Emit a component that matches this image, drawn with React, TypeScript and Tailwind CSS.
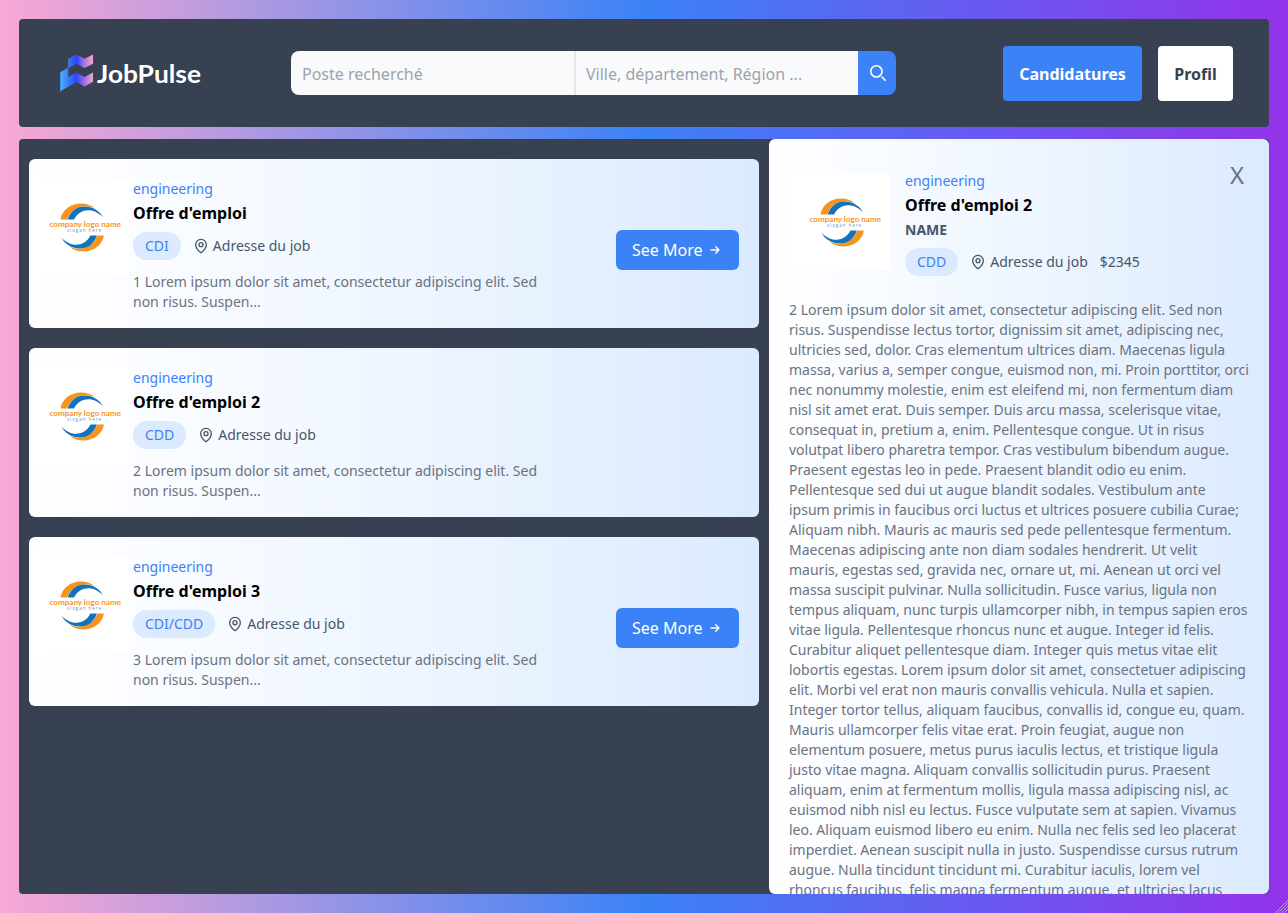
import React from "react";
import { HiOutlineArrowSmRight } from "react-icons/hi";
import { MapPin } from "lucide-react";

type Job = { id: number; title: string; contract: string; open?: boolean };

const jobs: Job[] = [
  { id: 1, title: "Offre d'emploi", contract: "CDI" },
  { id: 2, title: "Offre d'emploi 2", contract: "CDD", open: true },
  { id: 3, title: "Offre d'emploi 3", contract: "CDI/CDD" },
];

const description =
  "2 Lorem ipsum dolor sit amet, consectetur adipiscing elit. Sed non risus. Suspendisse lectus tortor, dignissim sit amet, adipiscing nec, ultricies sed, dolor. Cras elementum ultrices diam. Maecenas ligula massa, varius a, semper congue, euismod non, mi. Proin porttitor, orci nec nonummy molestie, enim est eleifend mi, non fermentum diam nisl sit amet erat. Duis semper. Duis arcu massa, scelerisque vitae, consequat in, pretium a, enim. Pellentesque congue. Ut in risus volutpat libero pharetra tempor. Cras vestibulum bibendum augue. Praesent egestas leo in pede. Praesent blandit odio eu enim. Pellentesque sed dui ut augue blandit sodales. Vestibulum ante ipsum primis in faucibus orci luctus et ultrices posuere cubilia Curae; Aliquam nibh. Mauris ac mauris sed pede pellentesque fermentum. Maecenas adipiscing ante non diam sodales hendrerit. Ut velit mauris, egestas sed, gravida nec, ornare ut, mi. Aenean ut orci vel massa suscipit pulvinar. Nulla sollicitudin. Fusce varius, ligula non tempus aliquam, nunc turpis ullamcorper nibh, in tempus sapien eros vitae ligula. Pellentesque rhoncus nunc et augue. Integer id felis. Curabitur aliquet pellentesque diam. Integer quis metus vitae elit lobortis egestas. Lorem ipsum dolor sit amet, consectetuer adipiscing elit. Morbi vel erat non mauris convallis vehicula. Nulla et sapien. Integer tortor tellus, aliquam faucibus, convallis id, congue eu, quam. Mauris ullamcorper felis vitae erat. Proin feugiat, augue non elementum posuere, metus purus iaculis lectus, et tristique ligula justo vitae magna. Aliquam convallis sollicitudin purus. Praesent aliquam, enim at fermentum mollis, ligula massa adipiscing nisl, ac euismod nibh nisl eu lectus. Fusce vulputate sem at sapien. Vivamus leo. Aliquam euismod libero eu enim. Nulla nec felis sed leo placerat imperdiet. Aenean suscipit nulla in justo. Suspendisse cursus rutrum augue. Nulla tincidunt tincidunt mi. Curabitur iaculis, lorem vel rhoncus faucibus, felis magna fermentum augue, et ultricies lacus";

function BrandLogo() {
  return (
    <div className="w-[232px] shrink-0 pl-[1px]">
      <svg width="150" height="40" viewBox="0 0 150 40">
        <defs>
          <linearGradient id="brandTop" x1="8" x2="33" y1="0" y2="0" gradientUnits="userSpaceOnUse">
            <stop offset="0" stopColor="#3c78f0" />
            <stop offset="0.36" stopColor="#2b46ff" />
            <stop offset="0.64" stopColor="#a577df" />
            <stop offset="1" stopColor="#f9a5cc" />
          </linearGradient>
          <linearGradient id="brandBottom" x1="0" x2="33" y1="0" y2="0" gradientUnits="userSpaceOnUse">
            <stop offset="0" stopColor="#4ab3f8" />
            <stop offset="0.5" stopColor="#2b46ff" />
            <stop offset="0.74" stopColor="#9b6fe0" />
            <stop offset="1" stopColor="#f9a5cc" />
          </linearGradient>
        </defs>
        <path d="M8.3 5.7 16.500 1.500l8 4.200L33 1.500v9.200L24.500 15 16.500 10.700 8.300 15.300Z" fill="url(#brandTop)" />
        <path d="M0 19.300 8.300 14.800v9.200l8.200-4.500 8 4.500L33 19.500v9.200l-8.500 4.900-8-4.600L0 38.500Z" fill="url(#brandBottom)" />
        <path d="M.5 19.500v18M8.500 6v9" stroke="#3a86d8" strokeWidth=".8" />
        <text x="37" y="29.500" textLength="104" lengthAdjust="spacingAndGlyphs" className="fill-white font-['Lato'] text-[24.500px] font-bold">JobPulse</text>
      </svg>
    </div>
  );
}

function CompanyLogo() {
  return (
    <svg width="96" height="96" viewBox="0 0 96 96" className="shrink-0">
      <rect width="96" height="96" fill="white" />
      <g>
        <path d="M27.500 40.500C29 31 37.500 24.500 48 24.500c6 0 10 1.700 13.500 4.500C48 24 38.500 30 34 40.500Z" fill="#f7941d" />
        <path d="M34.500 40.500C38 31 45 27 52 27.500c9 .5 15 5 18 11C62 29 47.500 28 41 40.500Z" fill="#1173bc" />
      </g>
      <g transform="rotate(180 49.200 48.500)">
        <path d="M27.500 40.500C29 31 37.500 24.500 48 24.500c6 0 10 1.700 13.500 4.500C48 24 38.500 30 34 40.500Z" fill="#f7941d" />
        <path d="M34.500 40.500C38 31 45 27 52 27.500c9 .5 15 5 18 11C62 29 47.500 28 41 40.500Z" fill="#1173bc" />
      </g>
      <text x="16.500" y="47.500" textLength="71.500" lengthAdjust="spacingAndGlyphs" className="fill-[#f7941d] font-['Lato'] text-[7.500px] font-bold">company logo name</text>
      <text x="34" y="53" textLength="34" className="fill-[#5b9bcd] font-['Open_Sans'] text-[4.500px]">slogan here</text>
    </svg>
  );
}

function Tags({ contract, salary }: { contract: string; salary?: string }) {
  return (
    <div className="flex items-center gap-3 text-sm text-[#475569]">
      <span className="rounded-full bg-[#dbeafe] px-3 py-1 text-[#3b82f6]">{contract}</span>
      <span className="flex items-center gap-1">
        <MapPin className="size-4" />
        Adresse du job
      </span>
      {salary && <span>{salary}</span>}
    </div>
  );
}

function JobCard({ job }: { job: Job }) {
  return (
    <article className="flex h-[169px] rounded-md bg-[linear-gradient(to_right,#fff,#eff6ff,#dbeafe)] pl-1 pr-5 pt-5">
      <CompanyLogo />
      <div className="ml-1 w-[425px]">
        <p className="text-sm text-[#3b82f6]">engineering</p>
        <h2 className="mt-0.5 font-bold text-black">{job.title}</h2>
        <div className="mt-[7px]">
          <Tags contract={job.contract} />
        </div>
        <p className="mt-3 text-sm text-[#6b7280]">{`${job.id} Lorem ipsum dolor sit amet, consectetur adipiscing elit. Sed non risus. Suspen...`}</p>
      </div>
      {!job.open && (
        <button className="ml-auto mt-[51px] flex h-10 w-[123px] items-center justify-between rounded-md bg-[#3b82f6] px-4 text-white">
          See More
          <HiOutlineArrowSmRight className="size-4" />
        </button>
      )}
    </article>
  );
}

export default function App() {
  return (
    <div className="relative flex h-[913px] w-[1288px] flex-col gap-3 overflow-hidden bg-[linear-gradient(to_right,#f9a8d4,#3b82f6,#9333ea)] p-[19px] font-['Noto_Sans',sans-serif] text-base">
      <header className="flex h-[108px] shrink-0 items-center rounded bg-[#374151] pl-10 pr-9">
        <BrandLogo />
        <form className="flex h-11 w-[605px]">
          <input placeholder="Poste recherché" className="w-[283px] rounded-l-lg bg-[#f9fafb] pl-[11px] pt-[2px] text-base placeholder:text-[#9ca3af]" />
          <input placeholder="Ville, département, Région ..." className="w-[284px] border-l-2 border-[#e5e7eb] bg-[#f9fafb] pl-[10px] pt-[2px] text-base placeholder:text-[#9ca3af]" />
          <button type="button" className="flex w-[38px] items-center justify-center rounded-r-lg bg-[#3b82f6] pl-[2px] text-white">
            <svg className="size-4" fill="none" viewBox="0 0 20 20">
              <path d="m19 19-4-4m0-7A7 7 0 1 1 1 8a7 7 0 0 1 14 0Z" stroke="currentColor" strokeWidth="2" strokeLinecap="round" strokeLinejoin="round" />
            </svg>
          </button>
        </form>
        <nav className="ml-auto flex gap-4 font-bold">
          <button className="h-[55px] w-[139px] rounded bg-[#3b82f6] pt-px text-white">Candidatures</button>
          <button className="h-[55px] w-[75px] rounded bg-white pt-px text-[#374151]">Profil</button>
        </nav>
      </header>
      <main className="flex h-[755px] rounded bg-[#374151]">
        <section className="flex w-[750px] flex-col gap-5 px-2.5 pt-5">
          {jobs.map((job) => (
            <JobCard key={job.id} job={job} />
          ))}
        </section>
        <aside className="flex w-[500px] flex-col overflow-hidden rounded-md bg-[linear-gradient(to_right,#fff,#eff6ff,#dbeafe)] px-5 pt-8">
          <div className="flex pl-1">
            <div className="pt-[3px]">
              <CompanyLogo />
            </div>
            <div className="ml-4">
              <p className="text-sm text-[#3b82f6]">engineering</p>
              <h2 className="mt-0.5 font-bold text-black">Offre d'emploi 2</h2>
              <p className="mb-2 mt-[3px] text-sm font-bold text-[#475569]">NAME</p>
              <Tags contract="CDD" salary="$2345" />
            </div>
            <button className="-mt-3.5 ml-auto mr-[5px] h-9 self-start text-2xl leading-9 text-[#6b7280]">X</button>
          </div>
          <p className="mt-6 text-sm text-[#6b7280]">{description}</p>
        </aside>
      </main>
      <svg className="absolute bottom-0 right-0" width="13" height="13" viewBox="0 0 13 13" stroke="#aaa6a4" strokeWidth="1">
        <path d="M0 13 13 0M3 13 13 3M6 13l7-7M9 13l4-4" />
      </svg>
    </div>
  );
}
